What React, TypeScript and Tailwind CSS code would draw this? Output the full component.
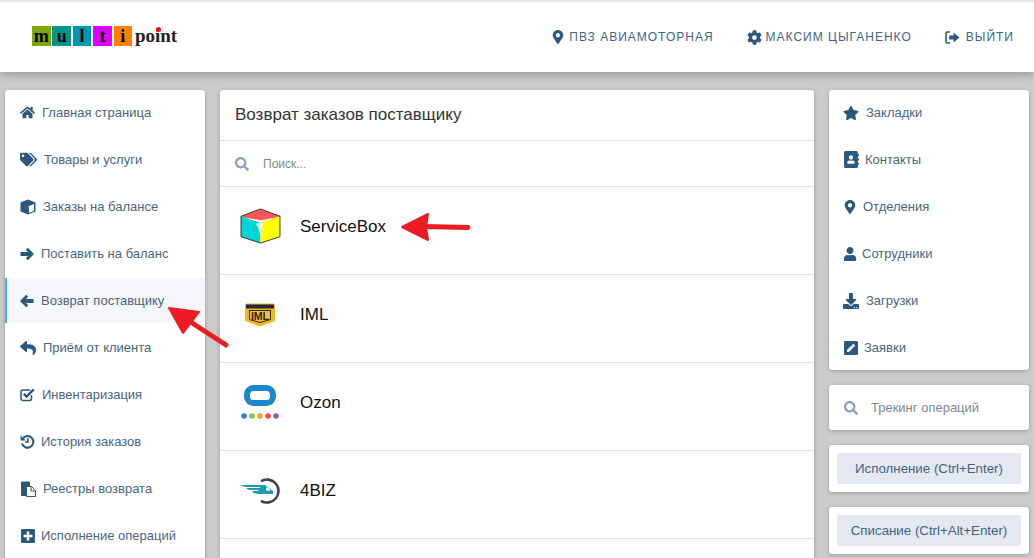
import type { ReactNode } from 'react'
import {
  FaAddressBook,
  FaCog,
  FaDownload,
  FaHome,
  FaMapMarkerAlt,
  FaPenSquare,
  FaPlusSquare,
  FaReply,
  FaSearch,
  FaStar,
  FaTags,
  FaUser,
} from 'react-icons/fa'

type NavItem = { label: string; icon: ReactNode; box: string; active?: boolean }

function ArrowIcon({ flip }: { flip?: boolean }) {
  return (
    <svg width="14" height="14" viewBox="0 0 14 14" fill="currentColor" className={flip ? '-scale-x-100' : ''}>
      <path d="M7.800.800 14 7l-6.200 6.200-2-2L8 9H.500V5H8L5.800 2.800z" />
    </svg>
  )
}

function CubeIcon() {
  return (
    <svg width="16" height="16" viewBox="0 0 16 16">
      <path d="M8 .500 15.500 3.500v9L8 15.500.500 12.500v-9z" fill="currentColor" />
      <path d="M8 7.500 14 5v6.800L9 13.900V8.300z" fill="#fff" />
      <path d="M3 3.600 8 1.800l5 1.800-5 2z" fill="currentColor" />
    </svg>
  )
}

function CheckSquareIcon() {
  return (
    <svg width="16" height="15" viewBox="0 0 16 15" fill="none" stroke="currentColor">
      <path d="M11.500 8v3.500a2 2 0 0 1-2 2H3a2 2 0 0 1-2-2V5a2 2 0 0 1 2-2h7" strokeWidth="1.500" />
      <path d="M3.800 6.800 6.600 9.600 13.800 2.400" strokeWidth="2.500" />
    </svg>
  )
}

function HistoryIcon() {
  return (
    <svg width="15" height="15" viewBox="0 0 15 15" fill="none" stroke="currentColor">
      <path d="M3 4.200A5.800 5.800 0 1 1 2 9.500" strokeWidth="2.100" />
      <path d="M.600 1.600 5.800 6.400H.600z" fill="currentColor" stroke="none" />
      <path d="M7.800 4v4H5" strokeWidth="1.600" />
    </svg>
  )
}

function PasteIcon() {
  return (
    <svg width="16" height="16" viewBox="0 0 16 16">
      <path d="M1 1.500a1 1 0 0 1 1-1h7a1 1 0 0 1 1 1V5H6.500v10H2a1 1 0 0 1-1-1z" fill="currentColor" />
      <path d="M6.500 5.500h5l4 4v6h-9z" fill="#fff" stroke="currentColor" strokeWidth="1" />
      <path d="M11 5.500v4.500h4.500" fill="none" stroke="currentColor" strokeWidth="1" />
    </svg>
  )
}

const LEFT_NAV: NavItem[] = [
  { label: 'Главная страница', icon: <FaHome size={15} />, box: 'w-[22px]' },
  { label: 'Товары и услуги', icon: <FaTags size={17} />, box: 'w-[24px]' },
  { label: 'Заказы на балансе', icon: <CubeIcon />, box: 'w-[23px]' },
  { label: 'Поставить на баланс', icon: <ArrowIcon />, box: 'w-[21px]' },
  { label: 'Возврат поставщику', icon: <ArrowIcon flip />, box: 'w-[21px]', active: true },
  { label: 'Приём от клиента', icon: <FaReply size={16} />, box: 'w-[23px]' },
  { label: 'Инвентаризация', icon: <CheckSquareIcon />, box: 'w-[22px]' },
  { label: 'История заказов', icon: <HistoryIcon />, box: 'w-[21px]' },
  { label: 'Реестры возврата', icon: <PasteIcon />, box: 'w-[23px]' },
  { label: 'Исполнение операций', icon: <FaPlusSquare size={16} />, box: 'w-[21px]' },
]

const RIGHT_NAV: NavItem[] = [
  { label: 'Закладки', icon: <FaStar size={16} />, box: 'w-[23px]' },
  { label: 'Контакты', icon: <FaAddressBook size={17} />, box: 'w-[22px]' },
  { label: 'Отделения', icon: <FaMapMarkerAlt size={14} />, box: 'w-[20px]' },
  { label: 'Сотрудники', icon: <FaUser size={14} />, box: 'w-[19px]' },
  { label: 'Загрузки', icon: <FaDownload size={16} />, box: 'w-[23px]' },
  { label: 'Заявки', icon: <FaPenSquare size={16} />, box: 'w-[21px]' },
]

const LOGO_LETTERS = [
  { ch: 'm', bg: 'bg-[#7fa800]' },
  { ch: 'u', bg: 'bg-[#00968a]' },
  { ch: 'l', bg: 'bg-[#0097b2]' },
  { ch: 't', bg: 'bg-[#e000ff]' },
  { ch: 'i', bg: 'bg-[#ff8000]' },
]

function Logo() {
  return (
    <div className="relative -mt-[2px] flex items-center gap-[1.700px] font-['Liberation_Serif',serif] font-bold text-black">
      {LOGO_LETTERS.map((l) => (
        <span key={l.ch} className={`flex h-5 w-[18.700px] items-center justify-center text-[18px] leading-none ${l.bg}`}>
          {l.ch}
        </span>
      ))}
      <span className="ml-px text-[19px] leading-5 text-[#222]">point</span>
      <span className="absolute left-[124px] top-px h-[5px] w-[5px] rounded-full bg-[#f01010]" />
    </div>
  )
}

function SignOutIcon() {
  return (
    <svg width="15" height="13" viewBox="0 0 15 13" fill="currentColor">
      <path d="M5 1H2.600C1.700 1 1 1.700 1 2.600v7.800c0 .900.700 1.600 1.600 1.600H5" fill="none" stroke="currentColor" strokeWidth="1.600" />
      <path d="M8.600 1.600 14.400 6.500 8.600 11.400V8.600H4.200V4.400h4.400z" />
    </svg>
  )
}

function ServiceBoxLogo() {
  return (
    <svg width="41" height="37" viewBox="0 0 42 38">
      <path d="M21 1 41 8.500 21 15 1 8.500z" fill="#ff5555" />
      <path d="M1 8.500 21 15v21L1 29.500z" fill="#00d5d5" />
      <path d="M41 8.500 21 15v21l20-6.500z" fill="#ffff00" />
      <path d="M5 9.800 21 15 37 9.800 21 12.500z" fill="#ffffff" />
      <path d="M21 15v16c-1-6-1.500-11-5-14.500zM21 15v12c.500-4 1-7 3-10.500z" fill="#ffffff" opacity="0.85" />
      <path d="M21 1 41 8.500v21L21 36 1 29.500v-21z" fill="none" stroke="#333" strokeWidth="1" />
    </svg>
  )
}

function ImlLogo() {
  return (
    <svg width="32" height="24" viewBox="0 0 32 24">
      <path d="M3 .500h26q2 0 2 2v14q0 1.500-1.500 2L16 23.500 2.500 18.500q-1.500-.5-1.500-2v-14q0-2 2-2z" fill="#f2b81c" />
      <path d="M2 1.500h28v4H2z" fill="#26263a" />
      <path d="M5.500 7.500h21v9L16 19.500l-10.500-3z" fill="#f6c525" stroke="#26263a" strokeWidth="1" />
      <text x="16" y="16.500" textAnchor="middle" fontSize="10.500" fontWeight="700" fontFamily="Liberation Sans, sans-serif" fill="#26263a">IML</text>
    </svg>
  )
}

function OzonLogo() {
  return (
    <svg width="40" height="36" viewBox="0 0 40 36">
      <rect x="7" y="3" width="26" height="15" rx="6.500" fill="none" stroke="#1a87cc" strokeWidth="6" />
      <circle cx="4" cy="31" r="2.800" fill="#1f86d0" />
      <circle cx="12" cy="31" r="2.800" fill="#8cc63f" />
      <circle cx="20" cy="31" r="2.800" fill="#f7a11a" />
      <circle cx="28" cy="31" r="2.800" fill="#f2504b" />
      <circle cx="36" cy="31" r="2.800" fill="#a851a8" />
    </svg>
  )
}

function FourBizLogo() {
  return (
    <svg width="40" height="26" viewBox="0 0 40 26">
      <path d="M21 3.200A11.500 11.500 0 1 1 21 22.800" fill="none" stroke="#3d4347" strokeWidth="2.600" />
      <path d="M0 7h21l-1 2H5zM6 10h14v2H9zM12 13h8v2.500h-6zM21 7h4l8 6v3H17z" fill="#1f9ab5" />
      <path d="M26 9.500h2l3 3h-5z" fill="#fff" />
    </svg>
  )
}

const PROVIDERS = [
  { name: 'ServiceBox', logo: <ServiceBoxLogo /> },
  { name: 'IML', logo: <ImlLogo /> },
  { name: 'Ozon', logo: <OzonLogo /> },
  { name: '4BIZ', logo: <FourBizLogo /> },
]

function NavList({ items, pad }: { items: NavItem[]; pad: string }) {
  return (
    <ul>
      {items.map((item) => (
        <li
          key={item.label}
          className={`mb-[2px] flex h-[45px] items-center border-l-2 text-[13px] ${pad} ${
            item.active ? 'border-[#3cb4e5] bg-[#f5f7fb]' : 'border-transparent'
          }`}
        >
          <span className={`flex shrink-0 text-[#2b587f] ${item.box}`}>{item.icon}</span>
          <span>{item.label}</span>
        </li>
      ))}
    </ul>
  )
}

export default function App() {
  return (
    <div className="relative h-[558px] w-[1034px] overflow-hidden bg-[#cccccc] font-['Liberation_Sans',sans-serif] text-[#4a6680]">
      {/* Top bar */}
      <header className="relative z-10 flex h-[72px] items-center justify-between border-t-2 border-[#e3e3e3] bg-white pl-8 pr-[20px] shadow-[0_2px_10px_rgba(0,0,0,0.3)]">
        <Logo />
        <nav className="flex items-center gap-[33px] text-[12px] tracking-[1px] text-[#3f6484]">
          <span className="flex items-center gap-[4px]">
            <FaMapMarkerAlt size={14} className="text-[#2b587f]" />
            ПВЗ АВИАМОТОРНАЯ
          </span>
          <span className="flex items-center gap-[4px]">
            <FaCog size={15} className="text-[#2b587f]" />
            МАКСИМ ЦЫГАНЕНКО
          </span>
          <span className="flex items-center gap-[6px]">
            <span className="text-[#2b587f]"><SignOutIcon /></span>
            ВЫЙТИ
          </span>
        </nav>
      </header>

      <div className="flex gap-[15px] pl-[5px] pt-[18px]">
        {/* Left menu */}
        <aside className="h-[480px] w-[200px] shrink-0 rounded-[3px] bg-white shadow-[0_1px_4px_rgba(0,0,0,0.25)]">
          <NavList items={LEFT_NAV} pad="pl-[13px]" />
        </aside>

        {/* Main */}
        <main className="h-[480px] w-[594px] shrink-0 rounded-[3px] bg-white shadow-[0_1px_4px_rgba(0,0,0,0.25)]">
          <h1 className="flex h-[51px] items-center border-b border-[#e2e2e2] px-[15px] text-[17px] font-normal text-[#333]">
            Возврат заказов поставщику
          </h1>
          <div className="flex h-[46px] items-center gap-[14px] border-b border-[#e2e2e2] pl-[15px] text-[12px] text-[#808890]">
            <FaSearch size={14} className="text-[#8aa0bb]" />
            Поиск...
          </div>
          {PROVIDERS.map((p) => (
            <div key={p.name} className="flex h-[88px] items-center border-b border-[#e2e2e2] pb-2 pl-[19px] text-[17px] text-[#111]">
              <span className="mr-[19px] flex w-[42px] shrink-0 justify-center">{p.logo}</span>
              {p.name}
            </div>
          ))}
        </main>

        {/* Right column */}
        <aside className="flex w-[200px] shrink-0 flex-col gap-[15px]">
          <div className="h-[280px] rounded-[3px] bg-white shadow-[0_1px_4px_rgba(0,0,0,0.25)]">
            <NavList items={RIGHT_NAV} pad="pl-[12px]" />
          </div>
          <div className="flex h-[45px] items-center gap-[13px] rounded-[3px] bg-white pl-[15px] text-[13px] text-[#808890] shadow-[0_1px_4px_rgba(0,0,0,0.25)]">
            <FaSearch size={14} className="text-[#8aa0bb]" />
            Трекинг операций
          </div>
          <div className="rounded-[3px] bg-white p-2 shadow-[0_1px_4px_rgba(0,0,0,0.25)]">
            <div className="flex h-[31px] items-center justify-center rounded-[2px] bg-[#e4e9f1] text-[13.300px] text-[#3f6484]">
              Исполнение (Ctrl+Enter)
            </div>
          </div>
          <div className="rounded-[3px] bg-white p-2 shadow-[0_1px_4px_rgba(0,0,0,0.25)]">
            <div className="flex h-[31px] items-center justify-center rounded-[2px] bg-[#e4e9f1] text-[13.300px] text-[#3f6484]">
              Списание (Ctrl+Alt+Enter)
            </div>
          </div>
        </aside>
      </div>

      {/* Red annotation arrows */}
      <svg className="absolute left-0 top-0 z-20" width="1034" height="558" fill="none">
        <path d="M402 227 428 214 426 227 428 240z" fill="#ed1c24" stroke="#ed1c24" strokeWidth="2" strokeLinejoin="round" />
        <path d="M424 226.500 468 227.500" stroke="#ed1c24" strokeWidth="5" strokeLinecap="round" />
        <path d="M169 308 199 312 183 333z" fill="#ed1c24" stroke="#ed1c24" strokeWidth="2" strokeLinejoin="round" />
        <path d="M186 319 226 345" stroke="#ed1c24" strokeWidth="5" strokeLinecap="round" />
      </svg>
    </div>
  )
}
